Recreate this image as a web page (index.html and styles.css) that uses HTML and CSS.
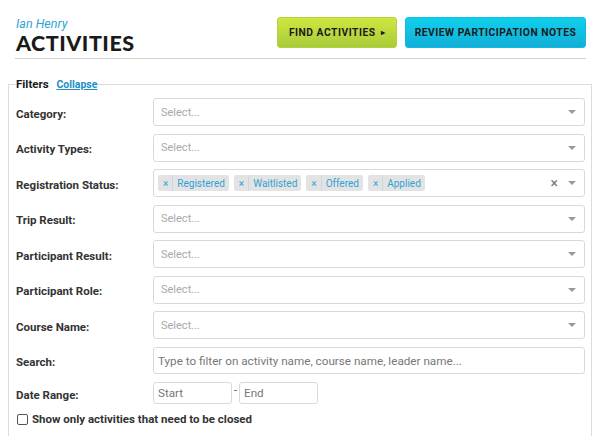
FILE: index.html
```html
<!DOCTYPE html>
<html>
<head>
<meta charset="utf-8">
<link rel="stylesheet" href="styles.css">
</head>
<body>
<div class="page">
  <header class="header">
    <div class="title-block">
      <div class="user">Ian Henry</div>
      <h1 class="title">ACTIVITIES</h1>
    </div>
    <div class="actions">
      <a class="btn btn-green">FIND ACTIVITIES <span class="tri">&#9656;</span></a>
      <a class="btn btn-cyan">REVIEW PARTICIPATION NOTES</a>
    </div>
  </header>

  <fieldset class="filters">
    <legend class="legend">Filters <a class="collapse">Collapse</a></legend>

    <div class="row">
      <label class="lbl">Category:</label>
      <div class="select"><span class="ph">Select...</span><span class="arrow"></span></div>
    </div>
    <div class="row">
      <label class="lbl">Activity Types:</label>
      <div class="select"><span class="ph">Select...</span><span class="arrow"></span></div>
    </div>
    <div class="row">
      <label class="lbl">Registration Status:</label>
      <div class="select multi">
        <span class="tag"><span class="tag-x">×</span><span class="tag-t">Registered</span></span>
        <span class="tag"><span class="tag-x">×</span><span class="tag-t">Waitlisted</span></span>
        <span class="tag"><span class="tag-x">×</span><span class="tag-t">Offered</span></span>
        <span class="tag"><span class="tag-x">×</span><span class="tag-t">Applied</span></span>
        <span class="clear">×</span><span class="arrow"></span>
      </div>
    </div>
    <div class="row">
      <label class="lbl">Trip Result:</label>
      <div class="select"><span class="ph">Select...</span><span class="arrow"></span></div>
    </div>
    <div class="row">
      <label class="lbl">Participant Result:</label>
      <div class="select"><span class="ph">Select...</span><span class="arrow"></span></div>
    </div>
    <div class="row">
      <label class="lbl">Participant Role:</label>
      <div class="select"><span class="ph">Select...</span><span class="arrow"></span></div>
    </div>
    <div class="row">
      <label class="lbl">Course Name:</label>
      <div class="select"><span class="ph">Select...</span><span class="arrow"></span></div>
    </div>
    <div class="row">
      <label class="lbl">Search:</label>
      <div class="text-input"><span class="ph dark">Type to filter on activity name, course name, leader name...</span></div>
    </div>
    <div class="row date-row">
      <label class="lbl">Date Range:</label>
      <div class="dates">
        <div class="date"><span class="ph dark">Start</span></div>
        <span class="dash">-</span>
        <div class="date"><span class="ph dark">End</span></div>
      </div>
    </div>
    <div class="check-row">
      <span class="checkbox"></span>
      <span class="check-lbl">Show only activities that need to be closed</span>
    </div>
  </fieldset>
</div>
</body>
</html>
```

FILE: styles.css
```css
html, body {
  margin: 0;
  padding: 0;
  background: #fff;
  height: 436px;
  overflow: hidden;
}
body {
  font-family: Roboto, "Liberation Sans", sans-serif;
  color: #333;
}
.page {
  padding-top: 17px;
}
.header {
  display: flex;
  justify-content: space-between;
  align-items: flex-start;
  margin: 0 14px 0 15px;
  padding-left: 1px;
  height: 41px;
  border-bottom: 1px solid #d0d0d0;
}
.user {
  font-style: italic;
  color: #2ea3d6;
  font-size: 12.5px;
  line-height: 14px;
}
.title {
  margin: 1px 0 0 0;
  font-family: Lato, Roboto, sans-serif;
  font-weight: 900;
  font-size: 21.5px;
  line-height: 22px;
  color: #1a1a1a;
  letter-spacing: 0.5px;
}
.actions {
  display: flex;
  gap: 8px;
}
.btn {
  display: flex;
  align-items: center;
  justify-content: center;
  height: 31px;
  box-sizing: border-box;
  border-radius: 3px;
  font-size: 10.3px;
  font-weight: 700;
  letter-spacing: 0.5px;
  color: #1a1a1a;
}
.btn-green {
  width: 120px;
  background: linear-gradient(#cfe63f, #a9cc3b);
  border: 1px solid #b5d23c;
}
.tri {
  font-size: 8px;
  margin-left: 5px;
}
.btn-cyan {
  width: 181px;
  background: linear-gradient(#10d0ec, #12aed8);
  border: 1px solid #10bde2;
}

.filters {
  margin: 18px 8px 0 8px;
  padding: 6px 6px 0 7px;
  border: 1px solid #dcdcdc;
  border-bottom: none;
  height: 360px;
  box-sizing: border-box;
}
.legend {
  padding: 0;
  font-size: 11.5px;
  font-weight: 700;
  color: #1a1a1a;
  line-height: 15px;
}
.collapse {
  color: #1d8fc6;
  text-decoration: underline;
  font-size: 10.5px;
  margin-left: 5px;
}
.row {
  display: flex;
  align-items: center;
  height: 28px;
  margin-bottom: 7.5px;
}
.lbl {
  width: 137px;
  flex: none;
  font-size: 11.5px;
  font-weight: 700;
  color: #333;
  padding-top: 3px;
}
.select, .text-input {
  flex: 1;
  height: 28px;
  box-sizing: border-box;
  border: 1px solid #d9d9d9;
  border-radius: 3px;
  display: flex;
  align-items: center;
  padding-left: 7px;
  padding-right: 8px;
  position: relative;
}
.text-input {
  height: 27px;
  padding-left: 4px;
}
.ph {
  font-size: 11px;
  color: #a9a9a9;
  flex: 1;
}
.ph.dark {
  color: #777;
  font-size: 11.7px;
}
.arrow {
  width: 0;
  height: 0;
  border-left: 4px solid transparent;
  border-right: 4px solid transparent;
  border-top: 4px solid #9a9a9a;
  margin-left: 4px;
}
.multi {
  padding-left: 4px;
  gap: 5px;
}
.tag {
  display: flex;
  align-items: stretch;
  height: 16px;
  background: #e3e3e3;
  border-radius: 2px;
  font-size: 10px;
}
.tag-x {
  color: #2ea3d6;
  padding: 0 4px 0 5px;
  border-right: 1px solid #c9d9e4;
  display: flex;
  align-items: center;
  font-size: 10px;
}
.tag-t {
  color: #2ea3d6;
  padding: 0 4px 0 4px;
  display: flex;
  align-items: center;
}
.clear {
  margin-left: auto;
  color: #777;
  font-size: 14px;
  line-height: 14px;
  margin-right: 1px;
}
.date-row {
  height: 22px;
  margin-bottom: 0;
}
.dates {
  display: flex;
  align-items: center;
}
.date {
  width: 79px;
  height: 22px;
  box-sizing: border-box;
  border: 1px solid #d9d9d9;
  border-radius: 3px;
  display: flex;
  align-items: center;
  padding-left: 4px;
}
.dash {
  width: 7px;
  text-align: center;
  font-size: 11px;
  color: #555;
  margin-top: -6px;
}
.check-row {
  display: flex;
  align-items: center;
  margin-top: 8px;
  padding-left: 1px;
  gap: 4px;
}
.checkbox {
  width: 9px;
  height: 9px;
  border: 1px solid #555;
  border-radius: 2px;
  background: #fff;
}
.check-lbl {
  font-size: 11.5px;
  font-weight: 700;
  color: #333;
}
```
